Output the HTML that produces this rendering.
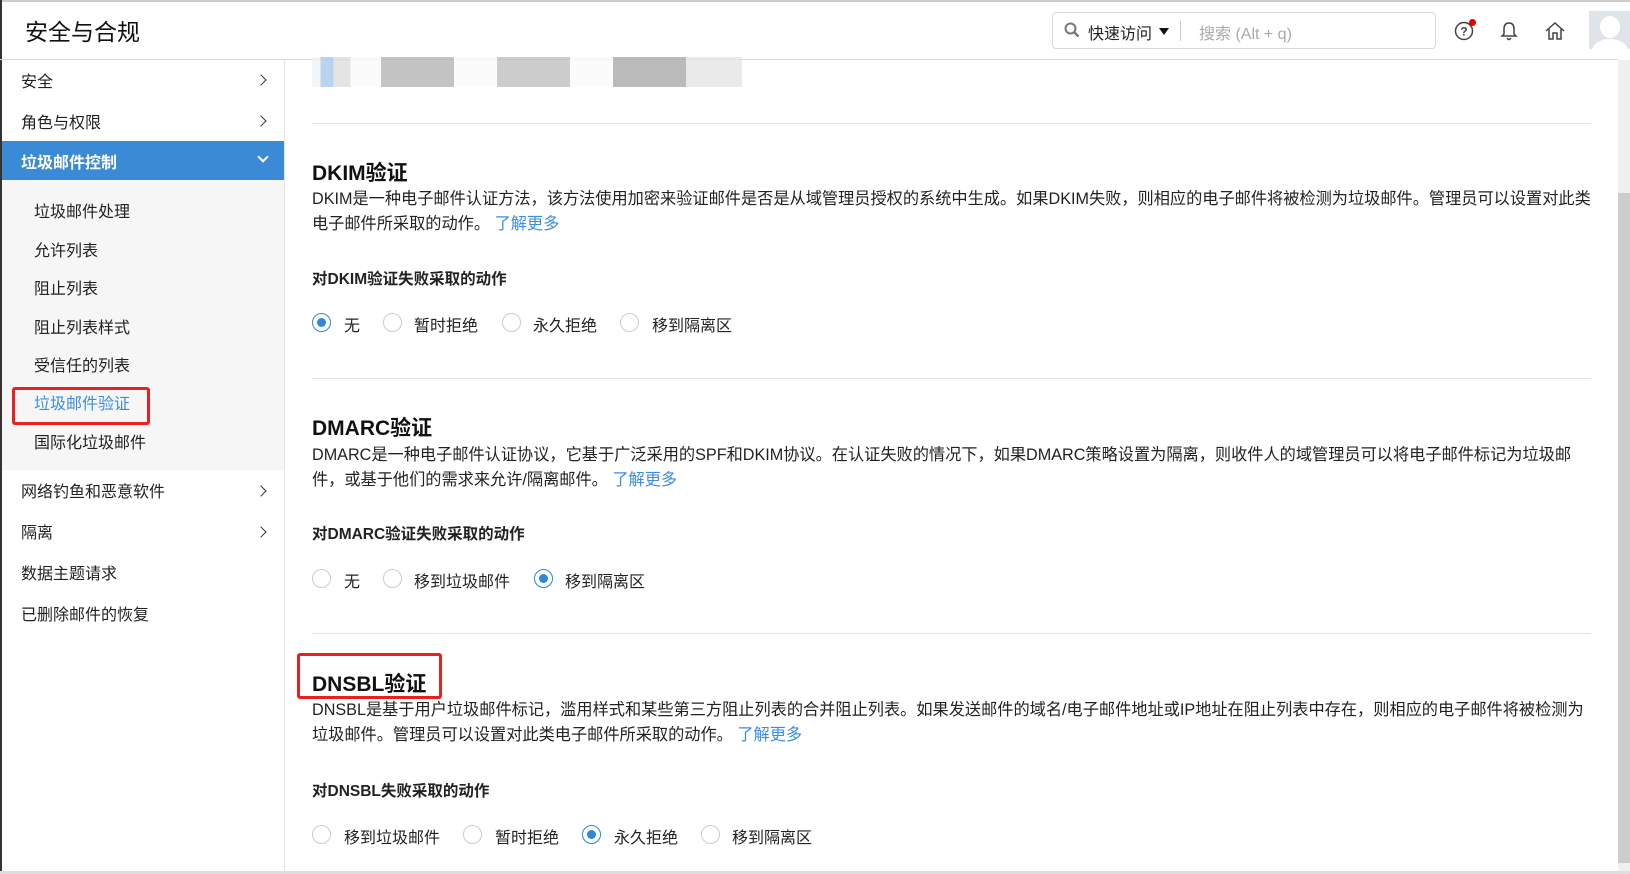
<!DOCTYPE html>
<html><head><meta charset="utf-8"><style>
*{margin:0;padding:0;box-sizing:border-box}
body{width:1630px;height:874px;overflow:hidden;background:#fff;font-family:"Liberation Sans","Noto Sans CJK SC",sans-serif;color:#222;position:relative}
.a{position:absolute;white-space:nowrap}
.si{position:absolute;left:21px;font-size:16px;color:#222}
.sub{position:absolute;left:34px;font-size:16px;color:#222}
.chev{position:absolute;left:257px;width:8px;height:8px;border-right:1.8px solid #333;border-top:1.8px solid #333;transform:rotate(45deg)}
.hr{position:absolute;left:312px;width:1279px;height:1px;background:#e3e3e3}
.t{position:absolute;left:312px;font-size:21px;font-weight:bold;color:#111}
.d{position:absolute;left:312px;white-space:nowrap;font-size:16.2px;line-height:25px;color:#222}
.d a{color:#3a8ee6;text-decoration:none}
.h{position:absolute;left:312px;font-size:15.5px;font-weight:bold;color:#222}
.r{position:absolute;width:19px;height:19px;border:1px solid #ccc;border-radius:50%}
.r.on{border:1.5px solid #2e86de}
.r.on::after{content:"";position:absolute;left:3.5px;top:3.5px;width:9px;height:9px;border-radius:50%;background:#2e86de}
.l{position:absolute;font-size:16px;color:#222}
.blk{position:absolute;top:57px;height:30px}
</style></head><body>
<div class="a" style="left:0;top:0;width:1630px;height:2px;background:#ccc"></div>
<div class="a" style="left:0;top:0;width:2px;height:874px;background:#333"></div>
<div class="a" style="left:25px;top:13px;font-size:23px;color:#111">安全与合规</div>
<div class="a" style="left:0;top:59px;width:1618px;height:1px;background:#d6d6d6"></div>
<div class="a" style="left:1052px;top:12px;width:384px;height:37px;border:1px solid #d8d8d8;border-radius:4px"></div>
<svg class="a" style="left:1064px;top:22px" width="16" height="16"><circle cx="6.5" cy="6.5" r="5" fill="none" stroke="#777" stroke-width="2"/><line x1="10" y1="10" x2="14.5" y2="14.5" stroke="#777" stroke-width="2.4"/></svg>
<div class="a" style="left:1088px;top:20px;font-size:16px;color:#222">快速访问</div>
<div class="a" style="left:1159px;top:28px;width:0;height:0;border-left:5.5px solid transparent;border-right:5.5px solid transparent;border-top:7px solid #111"></div>
<div class="a" style="left:1180px;top:21px;width:1px;height:20px;background:#ccc"></div>
<div class="a" style="left:1199px;top:20px;font-size:16px;color:#aaa">搜索 (Alt + q)</div>
<svg class="a" style="left:1453px;top:19px" width="24" height="24"><circle cx="11" cy="12" r="8.5" fill="none" stroke="#444" stroke-width="1.5"/><text x="11" y="16.5" font-size="12" font-weight="bold" text-anchor="middle" fill="#444" font-family="Liberation Sans">?</text><circle cx="19.5" cy="3.5" r="3.5" fill="#e60000"/></svg>
<svg class="a" style="left:1499px;top:20px" width="20" height="22"><path d="M10 3 C6 3 5 6 5 9 L5 14 L3 16 L17 16 L15 14 L15 9 C15 6 14 3 10 3Z M8 18 Q10 21 12 18" fill="none" stroke="#444" stroke-width="1.5"/></svg>
<svg class="a" style="left:1544px;top:20px" width="22" height="22"><path d="M2 11 L11 3 L20 11 M5 9 L5 19 L9 19 L9 13 L13 13 L13 19 L17 19 L17 9" fill="none" stroke="#444" stroke-width="1.5"/></svg>
<div class="a" style="left:1589px;top:11px;width:41px;height:38px;background:#dfe3ea;overflow:hidden"><div style="position:absolute;left:11px;top:5px;width:20px;height:22px;border-radius:50%;background:#fff"></div><div style="position:absolute;left:3px;top:28px;width:36px;height:24px;border-radius:50%;background:#fff"></div></div>
<div class="a" style="left:284px;top:60px;width:1px;height:814px;background:#e3e3e3"></div>
<div class="a" style="left:2px;top:180px;width:282px;height:290px;background:#f6f6f6"></div>
<div class="si" style="top:68px">安全</div><div class="chev" style="top:76px"></div>
<div class="si" style="top:109px">角色与权限</div><div class="chev" style="top:117px"></div>
<div class="a" style="left:2px;top:141px;width:282px;height:39px;background:#3a8ad6"></div>
<div class="si" style="top:149px;color:#fff;font-weight:bold">垃圾邮件控制</div>
<div class="a" style="left:259px;top:153px;width:8px;height:8px;border-right:2px solid #fff;border-bottom:2px solid #fff;transform:rotate(45deg)"></div>
<div class="sub" style="top:198px">垃圾邮件处理</div>
<div class="sub" style="top:237px">允许列表</div>
<div class="sub" style="top:275px">阻止列表</div>
<div class="sub" style="top:314px">阻止列表样式</div>
<div class="sub" style="top:352px">受信任的列表</div>
<div class="sub" style="top:390px;color:#3a8ee6">垃圾邮件验证</div>
<div class="a" style="left:12px;top:387px;width:138px;height:38px;border:3px solid #e82020;border-radius:3px"></div>
<div class="sub" style="top:429px">国际化垃圾邮件</div>
<div class="si" style="top:478px">网络钓鱼和恶意软件</div><div class="chev" style="top:487px"></div>
<div class="si" style="top:519px">隔离</div><div class="chev" style="top:528px"></div>
<div class="si" style="top:560px">数据主题请求</div>
<div class="si" style="top:601px">已删除邮件的恢复</div>
<div class="blk" style="left:312px;width:430px;background:linear-gradient(90deg,#eef3f8 0 2%,#a9c8ea 2% 5%,#ddd 5% 9%,#fafafa 9% 16%,#b5b5b5 16% 33%,#fafafa 33% 43%,#c0c0c0 43% 60%,#fafafa 60% 70%,#aaa 70% 87%,#e5e5e5 87% 100%);opacity:.8"></div>
<div class="hr" style="top:123px"></div>
<div class="t" style="top:157px">DKIM验证</div>
<div class="d" style="top:187px">DKIM是一种电子邮件认证方法，该方法使用加密来验证邮件是否是从域管理员授权的系统中生成。如果DKIM失败，则相应的电子邮件将被检测为垃圾邮件。管理员可以设置对此类<br>电子邮件所采取的动作。 <a>了解更多</a></div>
<div class="h" style="top:267px">对DKIM验证失败采取的动作</div>
<div class="r on" style="left:312px;top:313px"></div><div class="l" style="left:344px;top:312px">无</div>
<div class="r" style="left:383px;top:313px"></div><div class="l" style="left:414px;top:312px">暂时拒绝</div>
<div class="r" style="left:502px;top:313px"></div><div class="l" style="left:533px;top:312px">永久拒绝</div>
<div class="r" style="left:620px;top:313px"></div><div class="l" style="left:652px;top:312px">移到隔离区</div>
<div class="hr" style="top:378px"></div>
<div class="t" style="top:412px">DMARC验证</div>
<div class="d" style="top:443px">DMARC是一种电子邮件认证协议，它基于广泛采用的SPF和DKIM协议。在认证失败的情况下，如果DMARC策略设置为隔离，则收件人的域管理员可以将电子邮件标记为垃圾邮<br>件，或基于他们的需求来允许/隔离邮件。 <a>了解更多</a></div>
<div class="h" style="top:522px">对DMARC验证失败采取的动作</div>
<div class="r" style="left:312px;top:569px"></div><div class="l" style="left:344px;top:568px">无</div>
<div class="r" style="left:383px;top:569px"></div><div class="l" style="left:414px;top:568px">移到垃圾邮件</div>
<div class="r on" style="left:534px;top:569px"></div><div class="l" style="left:565px;top:568px">移到隔离区</div>
<div class="hr" style="top:633px"></div>
<div class="a" style="left:297px;top:653px;width:145px;height:46px;border:3px solid #e82020;border-radius:3px"></div>
<div class="t" style="top:668px">DNSBL验证</div>
<div class="d" style="top:698px">DNSBL是基于用户垃圾邮件标记，滥用样式和某些第三方阻止列表的合并阻止列表。如果发送邮件的域名/电子邮件地址或IP地址在阻止列表中存在，则相应的电子邮件将被检测为<br>垃圾邮件。管理员可以设置对此类电子邮件所采取的动作。 <a>了解更多</a></div>
<div class="h" style="top:779px">对DNSBL失败采取的动作</div>
<div class="r" style="left:312px;top:825px"></div><div class="l" style="left:344px;top:824px">移到垃圾邮件</div>
<div class="r" style="left:463px;top:825px"></div><div class="l" style="left:495px;top:824px">暂时拒绝</div>
<div class="r on" style="left:582px;top:825px"></div><div class="l" style="left:614px;top:824px">永久拒绝</div>
<div class="r" style="left:701px;top:825px"></div><div class="l" style="left:732px;top:824px">移到隔离区</div>
<div class="a" style="left:1618px;top:60px;width:12px;height:814px;background:#f0f0f0"></div>
<div class="a" style="left:1618px;top:193px;width:12px;height:670px;background:#cdcdcd"></div>
<div class="a" style="left:0;top:871px;width:1630px;height:3px;background:#ddd"></div>
</body></html>
